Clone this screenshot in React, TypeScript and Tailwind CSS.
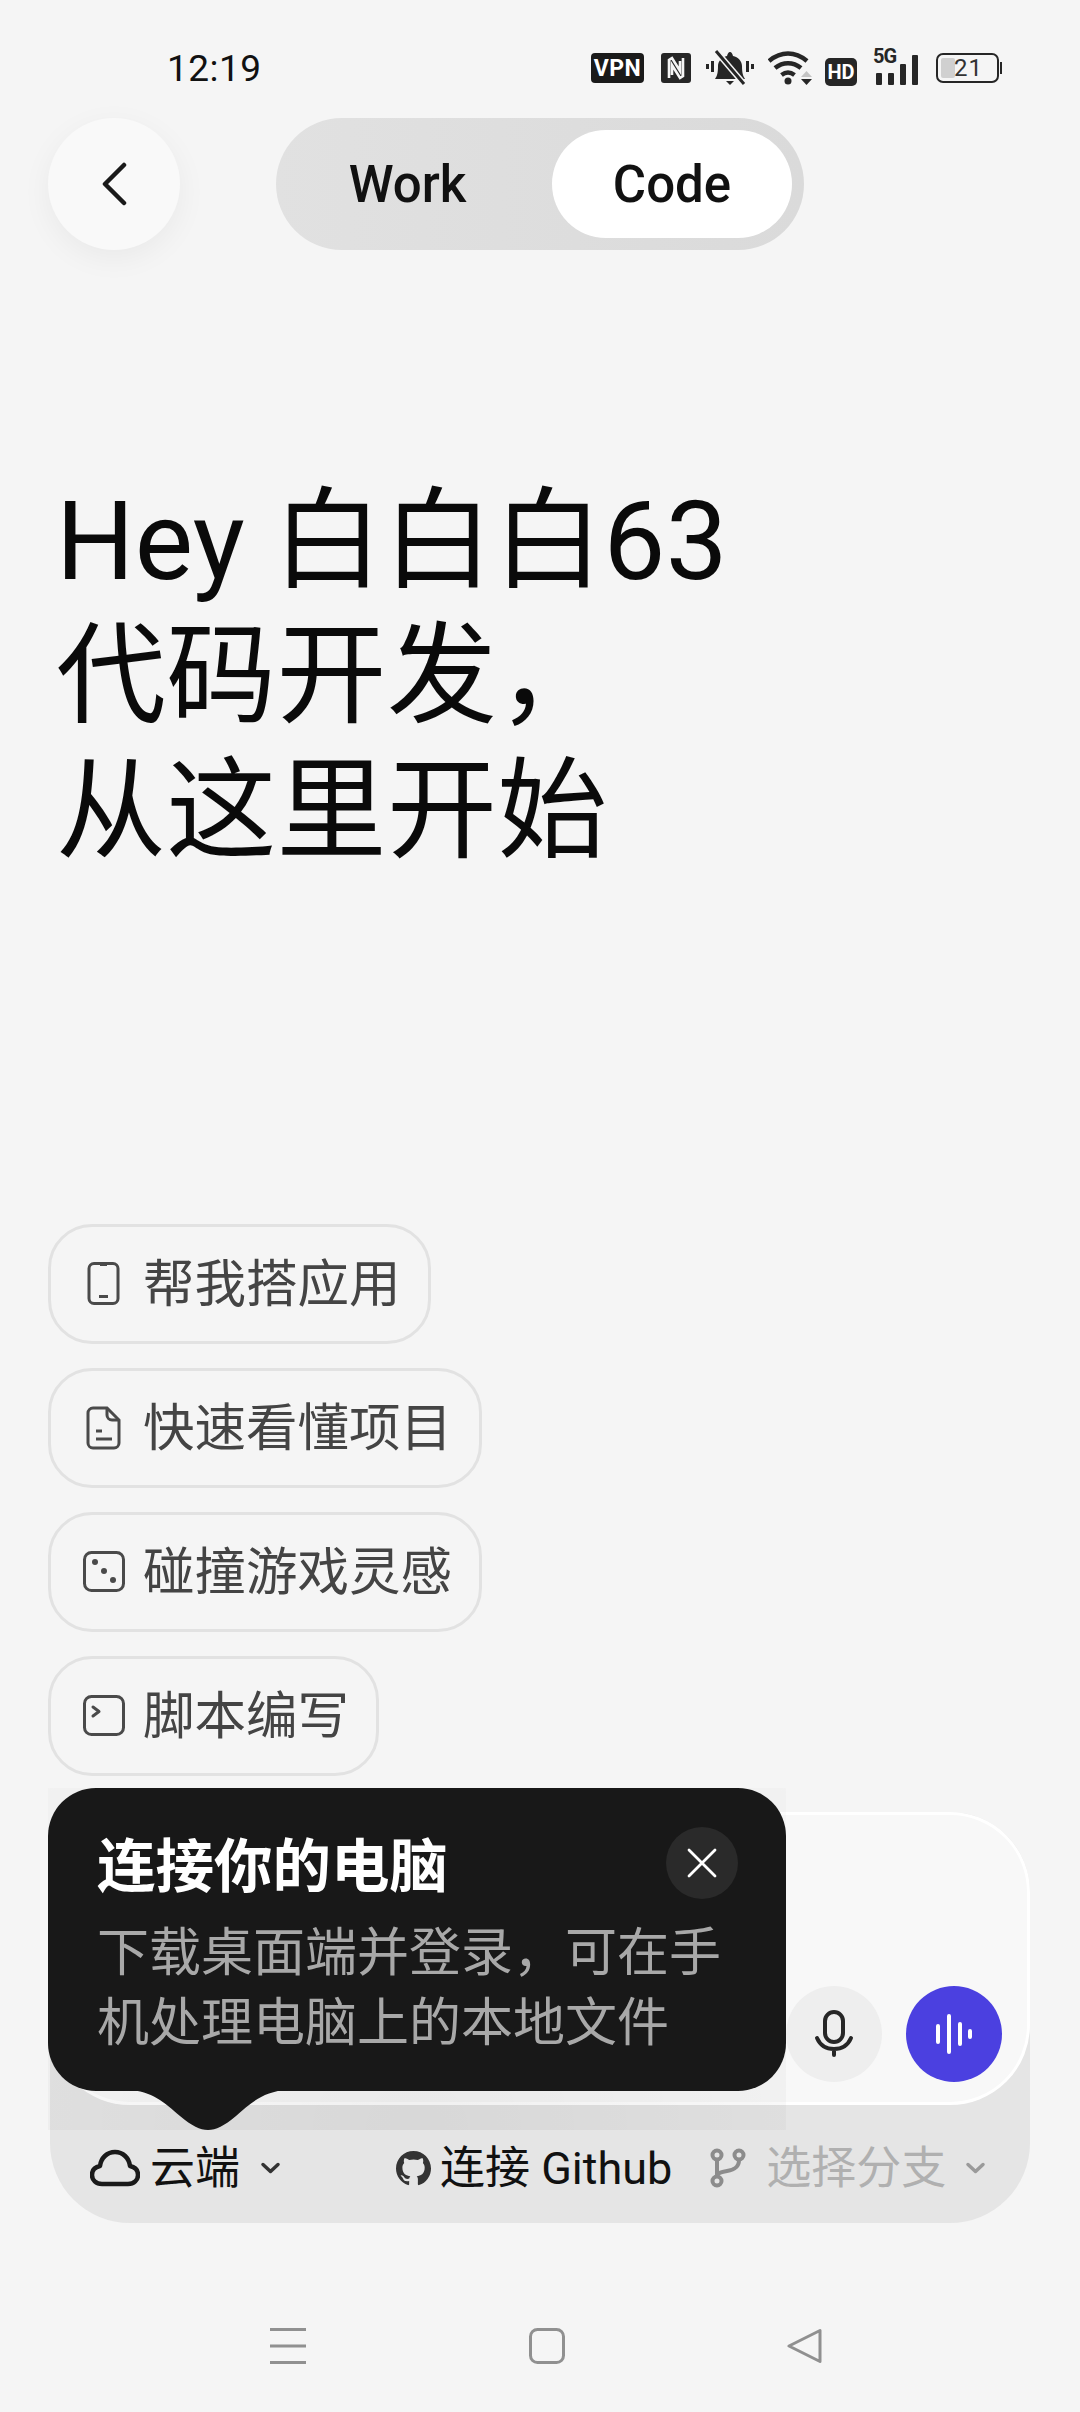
const font = "[font-family:Roboto,'Noto_Sans_CJK_SC',sans-serif]";

function StatusIcons() {
  return (
    <div className="ml-auto flex items-center">
      <div className="flex h-[30px] w-[53px] items-center justify-center rounded-[4px] bg-[#1a1a1a] text-[23px] font-bold leading-none tracking-[0.5px] text-white">
        VPN
      </div>
      <svg className="ml-[17px]" width="30" height="30" viewBox="0 0 30 30">
        <rect width="30" height="30" rx="3" fill="#262626" />
        <path d="M8 25V7l3-2 8 13V8M22 5v18l-3 2-8-13v10" fill="none" stroke="#f5f5f5" strokeWidth="2.6" />
      </svg>
      <svg className="ml-[15px]" width="48" height="36" viewBox="0 0 48 36">
        <path d="M9 29c2-3 3-6 3-13 0-5 4-9 9-10 .5-2 1.500-4 3-4s2.500 2 3 4c5 1 9 5 9 10 0 7 1 10 3 13z" fill="#262626" />
        <path d="M20 31h8l-4 4z" fill="#262626" />
        <path d="M10 1l28 33" stroke="#f5f5f5" strokeWidth="6" />
        <path d="M10 1l28 33" stroke="#262626" strokeWidth="3" />
        <path d="M1.500 14v5M6.500 11v11M41.500 11v11M46.500 14v5" stroke="#262626" strokeWidth="3" />
      </svg>
      <svg className="ml-[14px]" width="44" height="34" viewBox="0 0 44 34">
        <path d="M1 10c12-10 26-10 38 0M7 17c8-6.500 18-6.500 26 0M13.500 24c4-3 9-3 13 0" fill="none" stroke="#262626" strokeWidth="4.500" />
        <circle cx="20" cy="30" r="3.500" fill="#262626" />
        <path d="M33 26h11l-5.500-6z" fill="#c4c4c4" />
        <path d="M33 28h11l-5.500 6z" fill="#262626" />
      </svg>
      <div className="ml-[13px] flex h-[28px] w-[32px] items-center justify-center self-end rounded-[5px] bg-[#262626] text-[20px] font-bold leading-none text-white">
        HD
      </div>
      <div className="relative ml-[16px] h-[34px] w-[47px]">
        <span className="absolute left-0 top-[-5px] text-[20px] font-bold leading-none tracking-[-1px] text-[#262626]">5G</span>
        <div className="absolute bottom-0 left-[3px] h-[12px] w-[6px] rounded-[1px] bg-[#262626]" />
        <div className="absolute bottom-0 left-[15px] h-[12px] w-[6px] rounded-[1px] bg-[#262626]" />
        <div className="absolute bottom-0 left-[27px] h-[21px] w-[6px] rounded-[1px] bg-[#262626]" />
        <div className="absolute bottom-0 left-[39px] h-[30px] w-[6px] rounded-[1px] bg-[#262626]" />
      </div>
      <div className="ml-[16px] flex items-center">
        <div className="flex h-[30px] w-[63px] items-center rounded-[7px] border-2 border-[#262626] pl-[3px]">
          <div className="h-[20px] w-[14px] rounded-[2px] bg-[#d0d0d0]" />
          <span className="ml-[-1px] text-[24px] leading-none tracking-[1px] text-[#333]">21</span>
        </div>
        <div className="ml-[1px] h-[12px] w-[2px] bg-[#262626]" />
      </div>
    </div>
  );
}

function PhoneIcon() {
  return (
    <svg width="42" height="44" viewBox="0 0 42 44" fill="none" stroke="#4a4a4a" strokeWidth="3">
      <rect x="6" y="1.500" width="29" height="40" rx="5" />
      <path d="M17 2.500h7M16 34.500h9" />
    </svg>
  );
}

function FileIcon() {
  return (
    <svg width="42" height="44" viewBox="0 0 42 44" fill="none" stroke="#4a4a4a" strokeWidth="3">
      <path d="M9 2h14l12 12v23a5 5 0 0 1-5 5H9a5 5 0 0 1-5-5V7a5 5 0 0 1 5-5z" transform="translate(1 0)" />
      <path d="M24 2v7a5 5 0 0 0 5 5h7M13 25h6M13 33h16" />
    </svg>
  );
}

function DiceIcon() {
  return (
    <svg width="42" height="42" viewBox="0 0 42 42" fill="none">
      <rect x="1.500" y="1.500" width="39" height="38" rx="7" stroke="#4a4a4a" strokeWidth="3" />
      <circle cx="12" cy="11" r="3" fill="#4a4a4a" />
      <circle cx="21" cy="20" r="3" fill="#4a4a4a" />
      <circle cx="30" cy="29" r="3" fill="#4a4a4a" />
    </svg>
  );
}

function ScriptIcon() {
  return (
    <svg width="42" height="42" viewBox="0 0 42 42" fill="none" stroke="#4a4a4a" strokeWidth="3">
      <rect x="1.500" y="1.500" width="39" height="38" rx="7" />
      <path d="M10 12l6 4.500-6 4.500" strokeLinecap="round" strokeLinejoin="round" />
    </svg>
  );
}

function Chevron({ color }: { color: string }) {
  return (
    <svg width="21" height="12" viewBox="0 0 21 12" fill="none" stroke={color} strokeWidth="3.500" strokeLinecap="round" strokeLinejoin="round">
      <path d="M3 2.500l7.500 7 7.500-7" />
    </svg>
  );
}

const chips = [
  { label: "帮我搭应用", icon: <PhoneIcon /> },
  { label: "快速看懂项目", icon: <FileIcon /> },
  { label: "碰撞游戏灵感", icon: <DiceIcon /> },
  { label: "脚本编写", icon: <ScriptIcon /> },
];

export default function App() {
  return (
    <div className={`flex min-h-[2412px] w-[1080px] flex-col overflow-hidden bg-[#f5f5f5] ${font}`}>
      {/* status bar */}
      <div className="flex h-[118px] items-center pl-[167px] pr-[78px] pt-[18px]">
        <span className="text-[37px] leading-none tracking-[0.5px] text-[#111]">12:19</span>
        <StatusIcons />
      </div>

      {/* mode switch */}
      <div className="flex h-[132px] items-center pl-[48px]">
        <button className="flex h-[132px] w-[132px] items-center justify-center rounded-full bg-[#f9f9f9] shadow-[0_8px_30px_rgba(0,0,0,0.05)]">
          <svg width="28" height="44" viewBox="0 0 28 44" fill="none" stroke="#1a1a1a" strokeWidth="4.500" strokeLinecap="round" strokeLinejoin="round">
            <path d="M24 3L5 22l19 19" />
          </svg>
        </button>
        <div className="ml-[96px] flex h-[132px] w-[528px] items-center rounded-full bg-gradient-to-r from-[#e1e1e1] to-[#dadada] p-[12px]">
          <span className="flex-1 pr-[25px] text-center text-[51px] font-medium leading-none text-[#111]">Work</span>
          <span className="flex h-[108px] w-[240px] items-center justify-center rounded-full bg-white text-[51px] font-medium leading-none text-[#111]">
            Code
          </span>
        </div>
      </div>

      <h1 className="ml-[56px] mt-[224px] text-[110px] font-normal leading-[135px] tracking-[0.3px] text-[#0a0a0a]">
        Hey 白白白63
        <br />
        代码开发，
        <br />
        从这里开始
      </h1>

      {/* suggestion chips */}
      <div className="ml-[48px] mt-[345px] flex flex-col items-start gap-[24px]">
        {chips.map((chip) => (
          <div
            key={chip.label}
            className="flex h-[120px] items-center gap-[18px] rounded-[44px] border-[3px] border-[#e2e2e2] pl-[32px] pr-[27px] text-[51.5px] leading-none text-[#444]"
          >
            {chip.icon}
            <span className="pt-[2px]">{chip.label}</span>
          </div>
        ))}
      </div>

      {/* composer */}
      <div className="relative ml-[50px] mt-[36px] h-[411px] w-[980px] rounded-[80px] bg-[#e5e5e5]">
        <div className="flex h-[293px] items-end justify-end gap-[24px] rounded-[80px] border-[3px] border-white bg-[#f8f8f8] pb-[20px] pr-[25px]">
          <div className="flex h-[96px] w-[96px] items-center justify-center rounded-full bg-[#eeeeee]">
            <svg width="40" height="48" viewBox="0 0 40 48" fill="none" stroke="#262626" strokeWidth="4" strokeLinecap="round">
              <rect x="11" y="2" width="18" height="30" rx="9" />
              <path d="M3 28c3 7 9 11 17 11s14-4 17-11M20 39v6" />
            </svg>
          </div>
          <div className="flex h-[96px] w-[96px] items-center justify-center rounded-full bg-[#4b40e0]">
            <svg width="40" height="42" viewBox="0 0 40 42" fill="none" stroke="#ffffff" strokeWidth="4" strokeLinecap="round">
              <path d="M4 13v16M15 3v36M26 11v20M36 18v6" />
            </svg>
          </div>
        </div>

        <div className="flex h-[118px] items-center pl-[40px] pt-[8px] text-[45px] leading-none text-[#111]">
          <svg width="50" height="38" viewBox="0 0 50 38" fill="none" stroke="#1a1a1a" strokeWidth="4.500" strokeLinejoin="round">
            <path d="M12 35C6 35 2 31 2 26c0-5 3-8 8-9 1-8 7-14 15-14s14 6 15 14c5 1 8 4 8 9 0 5-4 9-10 9z" />
          </svg>
          <span className="ml-[10px]">云端</span>
          <span className="ml-[20px]"><Chevron color="#333" /></span>
          <svg className="ml-[115px]" width="35" height="35" viewBox="0 0 16 16" fill="#333">
            <path d="M8 0C3.580 0 0 3.580 0 8c0 3.540 2.290 6.530 5.470 7.590.4.070.55-.17.55-.38 0-.19-.01-.82-.01-1.490-2.010.37-2.530-.49-2.690-.94-.09-.23-.48-.94-.82-1.130-.28-.15-.68-.52-.01-.53.63-.01 1.080.58 1.230.82.720 1.210 1.870.87 2.330.66.070-.52.28-.87.510-1.070-1.780-.2-3.640-.89-3.640-3.950 0-.87.310-1.590.820-2.150-.08-.2-.36-1.020.080-2.120 0 0 .670-.21 2.200.820.640-.18 1.320-.27 2-.27s1.360.09 2 .27c1.530-1.040 2.200-.82 2.200-.82.440 1.100.160 1.920.080 2.120.510.560.820 1.270.820 2.150 0 3.070-1.870 3.750-3.650 3.950.290.250.540.730.540 1.480 0 1.070-.010 1.930-.010 2.200 0 .210.150.460.550.380A8.010 8.010 0 0 0 16 8c0-4.420-3.580-8-8-8z" />
          </svg>
          <span className="ml-[9px] whitespace-nowrap">连接 Github</span>
          <svg className="ml-[38px]" width="36" height="40" viewBox="0 0 36 40" fill="none" stroke="#8c8c8c" strokeWidth="4">
            <circle cx="7" cy="7" r="4.500" />
            <circle cx="29" cy="7" r="4.500" />
            <circle cx="7" cy="33" r="4.500" />
            <path d="M7 12v16M29 12c0 8-6 10-12 11-6 1-10 2-10 5" />
          </svg>
          <span className="ml-[20px] whitespace-nowrap text-[#b0b0b0]">选择分支</span>
          <span className="ml-[19px]"><Chevron color="#9a9a9a" /></span>
        </div>

        {/* connect tooltip */}
        <div className="absolute left-[-2px] top-[-24px] h-[342px] w-[738px] bg-[radial-gradient(ellipse_at_50%_100%,rgba(0,0,0,0.06),rgba(0,0,0,0.015))]" />
        <div className="absolute left-[-2px] top-[-24px] h-[303px] w-[738px] rounded-[48px] bg-[#181818] pl-[49px] pt-[42px]">
          <div className="text-[58.5px] font-bold leading-[74px] text-white">连接你的电脑</div>
          <p className="mt-[15px] w-[640px] text-[52px] leading-[70px] text-[#a8a8a8]">
            下载桌面端并登录，可在手机处理电脑上的本地文件
          </p>
          <div className="absolute right-[48px] top-[39px] flex h-[72px] w-[72px] items-center justify-center rounded-full bg-[#2a2a2a]">
            <svg width="30" height="30" viewBox="0 0 30 30" stroke="#ffffff" strokeWidth="2.800" strokeLinecap="round">
              <path d="M2 2l26 26M28 2L2 28" />
            </svg>
          </div>
          <svg className="absolute left-[80px] top-[302px]" width="160" height="40" viewBox="0 0 160 40" fill="#181818">
            <path d="M0 0h160c-24 1-36 12-52 26-12 10-20 14-28 14s-16-4-28-14C36 12 24 1 0 0z" />
          </svg>
        </div>
      </div>

      {/* nav bar */}
      <div className="mt-[105px] flex h-[36px] items-start">
        <svg className="ml-[270px]" width="36" height="36" viewBox="0 0 36 36" fill="#909090">
          <rect y="0" width="36" height="3" />
          <rect y="16.500" width="36" height="3" />
          <rect y="33" width="36" height="3" />
        </svg>
        <svg className="ml-[223px]" width="36" height="36" viewBox="0 0 36 36" fill="none" stroke="#909090" strokeWidth="3">
          <rect x="1.500" y="1.500" width="33" height="33" rx="7" />
        </svg>
        <svg className="ml-[222px]" width="36" height="36" viewBox="0 0 36 36" fill="none" stroke="#909090" strokeWidth="3" strokeLinejoin="round">
          <path d="M33 2.500v31L2 18z" />
        </svg>
      </div>
    </div>
  );
}
